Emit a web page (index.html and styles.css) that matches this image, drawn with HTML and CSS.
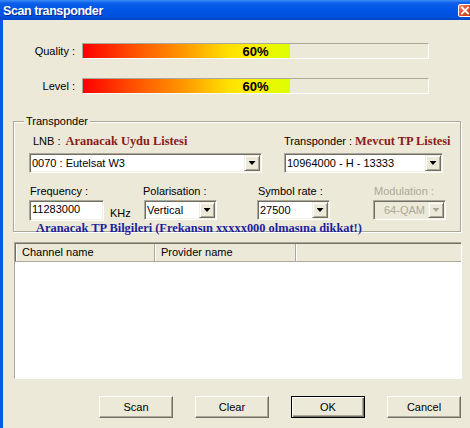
FILE: index.html
```html
<!DOCTYPE html>
<html lang="tr">
<head>
    <meta charset="UTF-8">
    <title>Scan transponder</title>
    <link rel="stylesheet" href="styles.css">
</head>
<body>
    <div class="window">
        <div class="titlebar">
            <span class="title">Scan transponder</span>
            <span class="close-btn">
                <svg width="14" height="13" viewBox="0 0 14 13">
                    <path d="M4 3.5l6 6M10 3.5l-6 6" stroke="#fff" stroke-width="1.8" stroke-linecap="square"/>
                </svg>
            </span>
        </div>

        <div class="client">
            <div class="meters">
                <div class="meter-row">
                    <span class="meter-label">Quality :</span>
                    <div class="meter">
                        <div class="meter-fill" style="width: 60%"></div>
                        <span class="meter-text">60%</span>
                    </div>
                </div>
                <div class="meter-row">
                    <span class="meter-label">Level :</span>
                    <div class="meter">
                        <div class="meter-fill" style="width: 60%"></div>
                        <span class="meter-text">60%</span>
                    </div>
                </div>
            </div>

            <div class="group">
                <span class="group-title">Transponder</span>
                <div class="group-body">
                    <div class="row-top">
                        <div class="field field-lnb">
                            <div class="field-label label-lnb">LNB :<b class="hint-red">Aranacak Uydu Listesi</b></div>
                            <div class="combo combo-lnb">
                                <span class="combo-text">0070 : Eutelsat W3</span>
                                <span class="combo-btn"></span>
                            </div>
                        </div>
                        <div class="field">
                            <div class="field-label">Transponder :<b class="hint-red hint-tp">Mevcut TP Listesi</b></div>
                            <div class="combo combo-tp">
                                <span class="combo-text">10964000 - H - 13333</span>
                                <span class="combo-btn"></span>
                            </div>
                        </div>
                    </div>

                    <div class="row-bottom">
                        <div class="field field-freq">
                            <div class="field-label">Frequency :</div>
                            <div class="freq-line">
                                <div class="edit"><span class="combo-text">11283000</span></div>
                                <span class="unit">KHz</span>
                            </div>
                        </div>
                        <div class="field field-pol">
                            <div class="field-label">Polarisation :</div>
                            <div class="combo combo-small">
                                <span class="combo-text">Vertical</span>
                                <span class="combo-btn"></span>
                            </div>
                        </div>
                        <div class="field field-sym">
                            <div class="field-label">Symbol rate :</div>
                            <div class="combo combo-small">
                                <span class="combo-text">27500</span>
                                <span class="combo-btn"></span>
                            </div>
                        </div>
                        <div class="field disabled">
                            <div class="field-label">Modulation :</div>
                            <div class="combo combo-small">
                                <span class="combo-text combo-mod">64-QAM</span>
                                <span class="combo-btn"></span>
                            </div>
                        </div>
                    </div>

                    <div class="hint-blue">Aranacak TP Bilgileri (Frekansın xxxxx000 olmasına dikkat!)</div>
                </div>
            </div>

            <div class="listview">
                <div class="lv-header">
                    <div class="lv-col col-channel">Channel name</div>
                    <div class="lv-col col-provider">Provider name</div>
                    <div class="lv-col col-rest"></div>
                </div>
                <div class="lv-body"></div>
            </div>

            <div class="buttons">
                <button class="btn">Scan</button>
                <button class="btn">Clear</button>
                <button class="btn btn-default">OK</button>
                <button class="btn">Cancel</button>
            </div>
        </div>
    </div>
</body>
</html>
```

FILE: styles.css
```css
* {
    box-sizing: border-box;
}
body {
    margin: 0;
    background-color: #ece9d8;
    font-family: "Liberation Sans", Arial, sans-serif;
    font-size: 11px;
    color: #000;
}
.window {
    width: 470px;
    height: 428px;
    overflow: hidden;
    background-color: #ece9d8;
}

/* title bar */
.titlebar {
    height: 20px;
    display: flex;
    align-items: center;
    justify-content: space-between;
    padding-left: 3px;
    background: linear-gradient(#3d8cf7 0, #0c5fea 3px, #0055e5 50%, #0050dc 85%, #0044c6 100%);
}
.title {
    color: #fff;
    font-weight: bold;
    font-size: 12.5px;
    letter-spacing: -0.4px;
    text-shadow: 1px 1px 0 #0a2a90;
    margin-top: 1px;
}
.close-btn {
    width: 14px;
    height: 13px;
    margin-right: -2px;
    margin-top: 1px;
    border: 1px solid #fff;
    border-radius: 2px;
    background: linear-gradient(135deg, #f08a6a 0, #e2512b 45%, #c43a16 100%);
    display: flex;
}
.close-btn svg {
    margin: -1px;
}

.client {
    height: 408px;
    border-left: 3px solid #0a58e6;
}

/* signal meters */
.meters {
    padding-top: 23px;
}
.meter-row {
    display: flex;
    align-items: center;
    height: 16px;
}
.meter-row + .meter-row {
    margin-top: 19px;
}
.meter-label {
    width: 72px;
    margin-right: 7px;
    text-align: right;
}
.meter {
    position: relative;
    width: 347px;
    height: 16px;
    border: 1px solid;
    border-color: #aca899 #fff #fff #aca899;
}
.meter-fill {
    height: 100%;
    background: linear-gradient(90deg, #ff0000 0, #ff5200 25%, #ff9c00 50%, #ffe000 70%, #ffee00 80%, #dcff00 100%);
}
.meter-text {
    position: absolute;
    top: 0;
    left: 0;
    right: 0;
    bottom: 0;
    display: flex;
    align-items: center;
    justify-content: center;
    font-weight: bold;
    font-size: 13px;
}

/* transponder group */
.group {
    margin: 27px 0 0 10px;
    width: 448px;
    height: 111px;
    border: 1px solid #aca899;
    box-shadow: inset 1px 1px 0 #fff, 1px 1px 0 #fff;
}
.group-title {
    display: table;
    margin: -7px 0 0 10px;
    padding: 0 2px;
    line-height: 13px;
    background-color: #ece9d8;
}
.group-body {
    padding: 7px 0 0 15px;
}
.row-top,
.row-bottom,
.freq-line {
    display: flex;
}
.row-bottom {
    margin-top: 12px;
}
.field-label {
    line-height: 13px;
    white-space: nowrap;
    margin-bottom: 5px;
}
.row-bottom .field-label {
    margin-bottom: 2px;
    padding-left: 1px;
}
.label-lnb {
    padding-left: 4px;
}
.hint-red {
    font-family: "Liberation Serif", "Times New Roman", serif;
    font-size: 12.4px;
    color: #8b1a1a;
    margin-left: 5px;
}
.hint-tp {
    margin-left: 3px;
}
.field-lnb {
    margin-right: 22px;
}
.field-freq {
    width: 115px;
}
.field-pol {
    width: 113px;
}
.field-sym {
    width: 116px;
}
.field-pol .field-label {
    margin-left: -2px;
}

/* combo boxes and edits */
.combo,
.edit {
    display: flex;
    height: 20px;
    padding: 1px;
    background-color: #fff;
    border: 1px solid;
    border-color: #aca899 #fff #fff #aca899;
    box-shadow: inset 1px 1px 0 #716f64, inset -1px -1px 0 #f1efe2;
}
.combo-lnb {
    width: 233px;
}
.combo-tp {
    width: 159px;
}
.combo-small {
    width: 73px;
}
.edit {
    width: 75px;
    height: 21px;
}
.combo-text {
    flex: 1;
    padding-left: 1px;
    line-height: 16px;
    white-space: nowrap;
    overflow: hidden;
}
.edit .combo-text {
    line-height: 14px;
}
.combo-btn {
    width: 16px;
    height: 16px;
    display: flex;
    align-items: center;
    justify-content: center;
    background-color: #ece9d8;
    border: 1px solid;
    border-color: #f1efe2 #716f64 #716f64 #f1efe2;
    box-shadow: inset 1px 1px 0 #fff, inset -1px -1px 0 #aca899;
}
.combo-btn::after {
    content: "";
    width: 7px;
    height: 4px;
    background-color: #000;
    clip-path: polygon(0 0, 100% 0, 50% 100%);
}
.unit {
    align-self: flex-end;
    margin: 0 0 1px 6px;
    line-height: 13px;
}
.disabled .field-label,
.disabled .combo-text {
    color: #aca899;
}
.disabled .combo {
    background-color: #ece9d8;
}
.disabled .combo-btn::after {
    background-color: #aca899;
}
.combo-mod {
    padding-left: 9px;
}
.hint-blue {
    margin-left: 7px;
    line-height: 14px;
    font-family: "Liberation Serif", "Times New Roman", serif;
    font-size: 12.4px;
    font-weight: bold;
    color: #1c1f9e;
    white-space: nowrap;
}

/* channel list */
.listview {
    margin: 10px 0 0 11px;
    width: 448px;
    height: 137px;
    border: 1px solid;
    border-color: #aca899 #fff #fff #aca899;
    background-color: #fff;
    display: flex;
    flex-direction: column;
}
.lv-header {
    display: flex;
    height: 19px;
    background-color: #ece9d8;
    border-bottom: 1px solid #aca899;
    border-top: 1px solid #716f64;
    border-left: 1px solid #716f64;
}
.lv-col {
    line-height: 17px;
    padding-left: 6px;
    border-right: 1px solid #aca899;
    box-shadow: inset 1px 0 0 #fff;
}
.col-channel {
    width: 139px;
}
.col-provider {
    width: 141px;
}
.col-rest {
    flex: 1;
    border-right: none;
}
.lv-body {
    flex: 1;
}

/* dialog buttons */
.buttons {
    display: flex;
    justify-content: flex-end;
    gap: 22px;
    margin-top: 17px;
    padding-right: 9px;
}
.btn {
    width: 74px;
    height: 22px;
    padding: 0;
    font-family: "Liberation Sans", Arial, sans-serif;
    font-size: 11px;
    color: #000;
    background-color: #ece9d8;
    border: 1px solid;
    border-color: #fff #716f64 #716f64 #fff;
    box-shadow: inset -1px -1px 0 #aca899;
}
.btn-default {
    border-color: #000;
    box-shadow: inset 1px 1px 0 #fff, inset -1px -1px 0 #716f64, inset -2px -2px 0 #aca899;
}
```
